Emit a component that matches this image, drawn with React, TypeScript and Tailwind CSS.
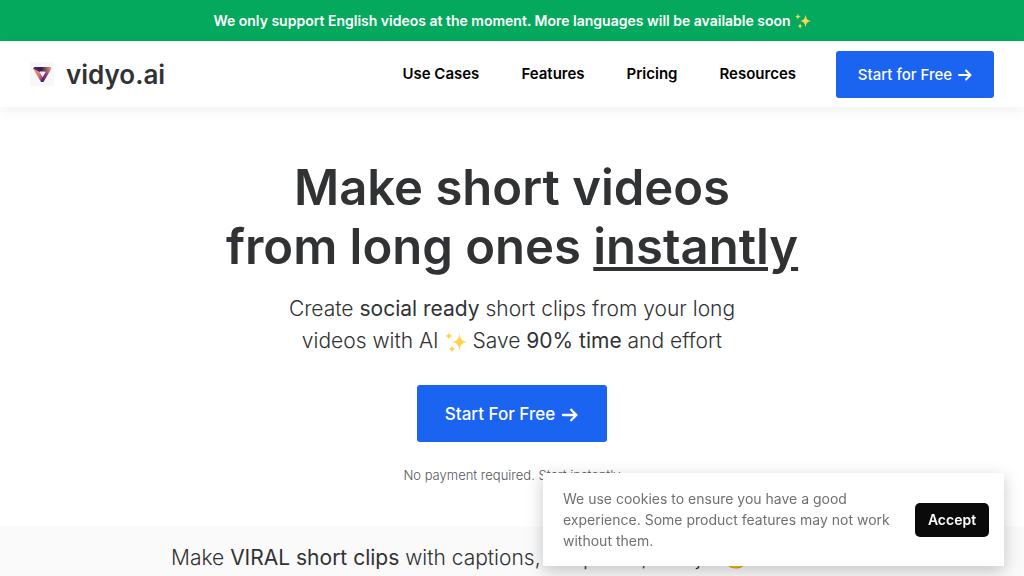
import React from 'react';

function Sparkles({ className }: { className: string }) {
  return (
    <svg viewBox="0 0 22 22" className={className} role="img" aria-label="sparkles">
      <defs>
        <radialGradient id="glow">
          <stop offset="0" stopColor="#ffd23f" />
          <stop offset="1" stopColor="#fddc7a" />
        </radialGradient>
      </defs>
      <g fill="url(#glow)">
        <path d="M14.5 2C15.4 8 16.8 10 22 11C16.8 12 15.4 14 14.5 20C13.6 14 12.2 12 7 11C12.2 10 13.6 8 14.5 2Z" />
        <path d="M4 1C4.6 3.8 5.4 4.4 8 5C5.4 5.6 4.6 6.2 4 9C3.4 6.2 2.6 5.6 0 5C2.6 4.4 3.4 3.8 4 1Z" />
        <path d="M7 14C7.5 16.6 8.2 17.4 10.5 18C8.2 18.6 7.5 19.4 7 22C6.5 19.4 5.8 18.6 3.5 18C5.8 17.4 6.5 16.6 7 14Z" />
      </g>
    </svg>
  );
}

function Arrow({ className }: { className: string }) {
  return (
    <svg viewBox="0 0 14 12" className={className} fill="none" stroke="currentColor" strokeWidth="2" strokeLinecap="round" strokeLinejoin="round" aria-hidden="true">
      <path d="M1 6H12.5M8 1.5L12.5 6L8 10.5" />
    </svg>
  );
}

function Logo() {
  return (
    <svg viewBox="0 0 24 24" className="size-6" aria-hidden="true">
      <defs>
        <linearGradient id="top" x1="0" y1="0" x2="1" y2="0">
          <stop offset="0" stopColor="#4a2f86" />
          <stop offset="0.45" stopColor="#3a1b56" />
          <stop offset="1" stopColor="#f2a36c" />
        </linearGradient>
        <linearGradient id="left" x1="0" y1="0" x2="1" y2="1">
          <stop offset="0" stopColor="#f0a070" />
          <stop offset="0.5" stopColor="#e8746a" />
          <stop offset="1" stopColor="#5b2a86" />
        </linearGradient>
        <linearGradient id="right" x1="1" y1="0" x2="0" y2="1">
          <stop offset="0" stopColor="#f0a070" />
          <stop offset="0.5" stopColor="#7d3a78" />
          <stop offset="1" stopColor="#402070" />
        </linearGradient>
      </defs>
      <rect width="24" height="24" fill="#f8f8f8" />
      <path d="M3 6.5L4.5 5H20.5L21.5 6.5L18 10H7Z" fill="url(#top)" />
      <path d="M3 6.5L11 20H13L14 17L9 9.5Z" fill="url(#left)" />
      <path d="M21.5 6.5L13.5 20H11L11.5 17L16 9.5Z" fill="url(#right)" />
      <path d="M9.5 9.5H15L12.3 14Z" fill="#fdf6f4" />
    </svg>
  );
}

const links = ['Use Cases', 'Features', 'Pricing', 'Resources'];

export default function App() {
  return (
    <div className="h-screen overflow-hidden bg-white font-['Inter',sans-serif] text-[#303234]">
      <div className="flex h-[41px] items-center justify-center gap-1 bg-[#04a95d] text-sm font-semibold text-white">
        <p>We only support English videos at the moment. More languages will be available soon</p>
        <Sparkles className="size-4" />
      </div>
      <header className="relative flex h-[66px] items-center justify-between bg-white px-[30px] shadow-[0_5px_14px_rgba(0,0,0,0.05)]">
        <a href="#" className="flex items-center gap-3 text-[26px] font-semibold">
          <Logo />
          vidyo.ai
        </a>
        <div className="flex items-center gap-10">
          <nav className="flex items-center gap-[42px] text-[15px] font-semibold text-black">
            {links.map((link) => (
              <a key={link} href="#">{link}</a>
            ))}
          </nav>
          <button type="button" className="flex h-[47px] w-[158px] items-center justify-center gap-1.5 rounded-[3px] bg-[#1b63f1] pt-0.5 text-[15px] font-medium text-white">
            Start for Free
            <Arrow className="h-3 w-3.5" />
          </button>
        </div>
      </header>
      <main>
        <section className="flex h-[419px] flex-col items-center pt-[51px] text-center">
          <h1 className="text-[49px] leading-[59px] font-semibold">
            Make short videos
            <br />
            from long ones <span className="underline">instantly</span>
          </h1>
          <p className="mt-[17px] text-[21px] leading-8 font-light">
            Create <span className="font-normal">social ready</span> short clips from your long
            <br />
            videos with AI <Sparkles className="inline size-[22px] align-text-bottom" /> Save <span className="font-normal">90% time</span> and effort
          </p>
          <button type="button" className="mt-7 flex h-[57px] w-[190px] items-center justify-center gap-1.5 rounded-[3px] bg-[#1b63f1] pt-0.5 text-[17px] font-medium text-white">
            Start For Free
            <Arrow className="h-3.5 w-[18px]" />
          </button>
          <p className="mt-6 text-[13px] font-light text-[#55585a]">No payment required. Start instantly</p>
        </section>
        <section className="bg-[#fafafa] px-4 py-4 text-center text-[21px] leading-8 font-light">
          <h2>
            Make <span className="font-normal">VIRAL short clips</span> with captions, templates, emojis 🤩 and more!
          </h2>
        </section>
      </main>
      <aside aria-label="Cookie notice" className="fixed right-5 bottom-[10px] flex w-[461px] items-center justify-between bg-white py-[15px] pr-[15px] pl-5 shadow-[0_5px_16px_rgba(0,0,0,0.22)]">
        <p className="w-[335px] text-sm leading-[21px] text-[#707070]">
          We use cookies to ensure you have a good experience. Some product features may not work without them.
        </p>
        <button type="button" className="h-[34px] w-[74px] rounded-[5px] bg-[#0a0a0a] text-sm font-semibold text-white">Accept</button>
      </aside>
    </div>
  );
}
